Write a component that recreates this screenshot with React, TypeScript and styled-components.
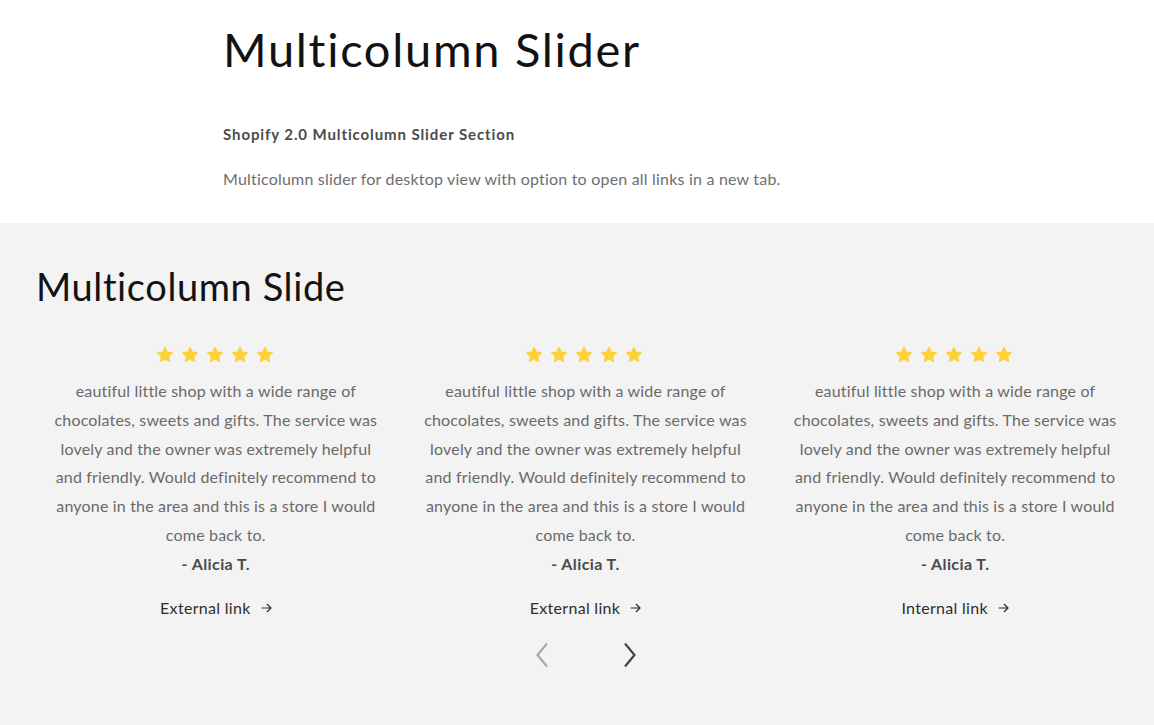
import React from "react";
import styled, { createGlobalStyle } from "styled-components";

const Global = createGlobalStyle`
  html, body { margin: 0; padding: 0; background: #fff; }
  body { font-family: Lato, "Open Sans", sans-serif; -webkit-font-smoothing: antialiased; }
  * { box-sizing: border-box; }
`;

const Page = styled.div`
  width: 1154px;
  min-height: 725px;
  display: flex;
  flex-direction: column;
`;

const Intro = styled.section`
  background: #fff;
  height: 223px;
  padding: 17px 0 0 223px;
`;

const Title = styled.h1`
  margin: 0;
  font-weight: 400;
  font-size: 47px;
  line-height: 64px;
  letter-spacing: 1.7px;
  color: #121212;
`;

const Subtitle = styled.p`
  margin: 42px 0 0;
  font-size: 15px;
  font-weight: 700;
  letter-spacing: 0.9px;
  color: #4b4b4b;
  line-height: 22px;
`;

const Lead = styled.p`
  margin: 22px 0 0;
  font-size: 16px;
  letter-spacing: 0.2px;
  color: #6e6e6e;
  line-height: 24px;
`;

const Slider = styled.section`
  flex: 1;
  background: #f3f3f3;
  padding: 39px 19px 44px 36px;
`;

const SliderTitle = styled.h2`
  margin: 0;
  font-weight: 400;
  font-size: 38px;
  line-height: 48px;
  letter-spacing: 0.6px;
  color: #121212;
`;

const Columns = styled.div`
  display: grid;
  grid-template-columns: repeat(3, 1fr);
  column-gap: 10px;
  margin-top: 36px;
`;

const Column = styled.div`
  display: flex;
  flex-direction: column;
  align-items: center;
  text-align: center;
`;

const Stars = styled.div`
  display: flex;
  gap: 7px;
  height: 18px;
  margin-left: -2px;
`;

const Quote = styled.p`
  margin: 13px 0 0;
  font-size: 16px;
  line-height: 28.8px;
  letter-spacing: 0.18px;
  color: #6a6a6a;
`;

const Line = styled.span`
  display: block;
  white-space: nowrap;
`;

const Author = styled.p`
  margin: 0;
  font-size: 16px;
  font-weight: 700;
  line-height: 28.8px;
  letter-spacing: 0.4px;
  color: #4a4a4a;
`;

const LinkRow = styled.a`
  margin-top: 17px;
  display: inline-flex;
  align-items: center;
  gap: 10px;
  font-size: 16px;
  line-height: 24px;
  letter-spacing: 0.3px;
  color: #2e2e2e;
  text-decoration: none;
`;

const Nav = styled.div`
  display: flex;
  justify-content: center;
  gap: 68px;
  margin: 20px 0 0 0;
`;

const NavButton = styled.button<{ $disabled?: boolean }>`
  border: 0;
  background: transparent;
  padding: 0;
  width: 20px;
  height: 30px;
  display: flex;
  align-items: center;
  justify-content: center;
  color: ${(p) => (p.$disabled ? "#a9a9a9" : "#454545")};
  cursor: pointer;
`;

const Star = () => (
  <svg width="18" height="18" viewBox="0 0 24 24">
    <path
      d="M12 2.2l2.9 6.1 6.6.8-4.9 4.6 1.3 6.6L12 17.1l-5.9 3.2 1.3-6.6-4.9-4.6 6.6-.8z"
      fill="#fdd23a"
      stroke="#fdd23a"
      strokeWidth="2"
      strokeLinejoin="round"
    />
  </svg>
);

const Arrow = () => (
  <svg width="11" height="10" viewBox="0 0 11 10" fill="none">
    <path d="M0.5 5h9.5M6 1l4 4-4 4" stroke="#2e2e2e" strokeWidth="1.2" />
  </svg>
);

const Chevron = ({ dir }: { dir: "left" | "right" }) => (
  <svg width="14" height="26" viewBox="0 0 14 26" fill="none">
    <path
      d={dir === "left" ? "M12 1.5L2.5 13l9.5 11.5" : "M2 1.5L11.5 13 2 24.5"}
      stroke="currentColor"
      strokeWidth="2.2"
    />
  </svg>
);

const quoteLines = [
  "eautiful little shop with a wide range of",
  "chocolates, sweets and gifts. The service was",
  "lovely and the owner was extremely helpful",
  "and friendly. Would definitely recommend to",
  "anyone in the area and this is a store I would",
  "come back to.",
];

const cards = [
  { link: "External link" },
  { link: "External link" },
  { link: "Internal link" },
];

export default function App() {
  return (
    <Page>
      <Global />
      <Intro>
        <Title>Multicolumn Slider</Title>
        <Subtitle>Shopify 2.0 Multicolumn Slider Section</Subtitle>
        <Lead>Multicolumn slider for desktop view with option to open all links in a new tab.</Lead>
      </Intro>
      <Slider>
        <SliderTitle>Multicolumn Slide</SliderTitle>
        <Columns>
          {cards.map((c, i) => (
            <Column key={i}>
              <Stars>
                {[0, 1, 2, 3, 4].map((s) => (
                  <Star key={s} />
                ))}
              </Stars>
              <Quote>
                {quoteLines.map((l, j) => (
                  <Line key={j}>{l}</Line>
                ))}
              </Quote>
              <Author>- Alicia T.</Author>
              <LinkRow href="#">
                {c.link}
                <Arrow />
              </LinkRow>
            </Column>
          ))}
        </Columns>
        <Nav>
          <NavButton $disabled aria-label="Previous">
            <Chevron dir="left" />
          </NavButton>
          <NavButton aria-label="Next">
            <Chevron dir="right" />
          </NavButton>
        </Nav>
      </Slider>
    </Page>
  );
}
